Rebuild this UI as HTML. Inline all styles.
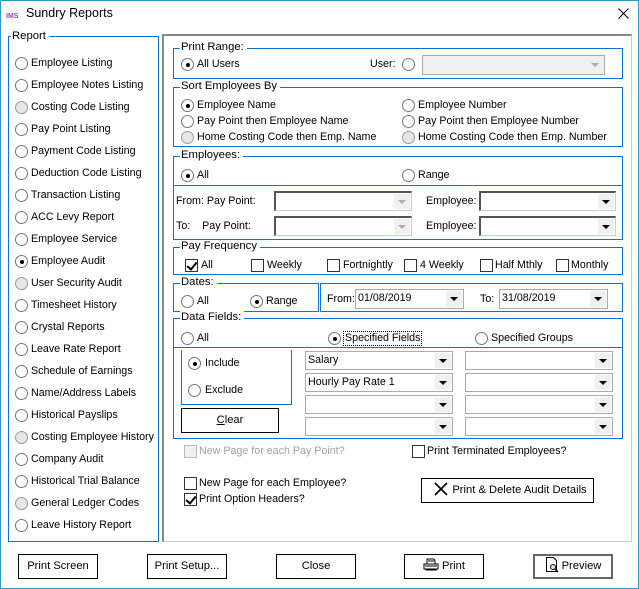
<!DOCTYPE html>
<html><head><meta charset="utf-8"><style>
*{box-sizing:border-box;margin:0;padding:0}
body{width:639px;height:589px;position:relative;background:#fff;font-family:Tahoma,"Liberation Sans","DejaVu Sans",sans-serif;font-size:10.7px;color:#000;overflow:hidden}
.a{position:absolute;white-space:nowrap;line-height:13px}
.g{position:absolute;border:1px solid #0a74d4}
.gl{position:absolute;background:#fff;padding:0 3px 0 1px;line-height:13px;font-size:11.3px}
.r{position:absolute;width:13px;height:13px;border:1px solid #777;border-radius:50%;background:#fff}
.r.gr{background:#e6e6e6;border-color:#999}
.r.on::after{content:"";position:absolute;left:3.5px;top:3.5px;width:4px;height:4px;border-radius:50%;background:#000}
.c{position:absolute;width:13px;height:13px;border:1px solid #333;background:#fff}
.c.dis{border-color:#bbb;background:#f0f0f0}
.c.on::after{content:"";position:absolute;left:3px;top:0px;width:4px;height:8px;border:solid #000;border-width:0 2px 2px 0;transform:rotate(40deg)}
.cb{position:absolute;border:1px solid #aaa;background:#fff;line-height:16px;padding-left:2px}
.cb.d{border-color:#555 #ccc #ccc #555;border-width:2px 1px 1px 2px}
.arr{position:absolute;right:1px;top:1px;bottom:1px;width:16px;background:#f0f0f0}
.arr::after{content:"";position:absolute;left:4px;top:50%;margin-top:-2px;border:4px solid transparent;border-top:4px solid #000;border-bottom:0}
.arr.gy::after{border-top-color:#aaa}
.b{position:absolute;border:1px solid #000;background:#fff;text-align:center;line-height:22px;font-size:11.2px}
</style></head><body>
<div style="position:absolute;left:0;top:0;width:639px;height:589px;border:1px solid #2f9bc0"></div>
<div class="a" style="left:6px;top:10px;font-size:7px;font-weight:bold;color:#a23ab8">IMS</div>
<div class="a" style="left:26px;top:5px;font-size:12.5px;line-height:16px">Sundry Reports</div>
<svg style="position:absolute;left:618px;top:8px" width="11" height="11"><path d="M0.5 0.5L10.5 10.5M10.5 0.5L0.5 10.5" stroke="#000" stroke-width="1"/></svg>

<div class="g" style="left:8px;top:36px;width:151px;height:506px"></div>
<div class="gl" style="left:11px;top:30px">Report</div>
<div class="r" style="left:15px;top:57px"></div><div class="a" style="left:31px;top:57px">Employee Listing</div>
<div class="r" style="left:15px;top:79px"></div><div class="a" style="left:31px;top:79px">Employee Notes Listing</div>
<div class="r gr" style="left:15px;top:101px"></div><div class="a" style="left:31px;top:101px">Costing Code Listing</div>
<div class="r" style="left:15px;top:123px"></div><div class="a" style="left:31px;top:123px">Pay Point Listing</div>
<div class="r" style="left:15px;top:145px"></div><div class="a" style="left:31px;top:145px">Payment Code Listing</div>
<div class="r" style="left:15px;top:167px"></div><div class="a" style="left:31px;top:167px">Deduction Code Listing</div>
<div class="r" style="left:15px;top:189px"></div><div class="a" style="left:31px;top:189px">Transaction Listing</div>
<div class="r" style="left:15px;top:211px"></div><div class="a" style="left:31px;top:211px">ACC Levy Report</div>
<div class="r" style="left:15px;top:233px"></div><div class="a" style="left:31px;top:233px">Employee Service</div>
<div class="r on" style="left:15px;top:255px"></div><div class="a" style="left:31px;top:255px">Employee Audit</div>
<div class="r gr" style="left:15px;top:277px"></div><div class="a" style="left:31px;top:277px">User Security Audit</div>
<div class="r" style="left:15px;top:299px"></div><div class="a" style="left:31px;top:299px">Timesheet History</div>
<div class="r" style="left:15px;top:321px"></div><div class="a" style="left:31px;top:321px">Crystal Reports</div>
<div class="r" style="left:15px;top:343px"></div><div class="a" style="left:31px;top:343px">Leave Rate Report</div>
<div class="r" style="left:15px;top:365px"></div><div class="a" style="left:31px;top:365px">Schedule of Earnings</div>
<div class="r" style="left:15px;top:387px"></div><div class="a" style="left:31px;top:387px">Name/Address Labels</div>
<div class="r" style="left:15px;top:409px"></div><div class="a" style="left:31px;top:409px">Historical Payslips</div>
<div class="r gr" style="left:15px;top:431px"></div><div class="a" style="left:31px;top:431px">Costing Employee History</div>
<div class="r" style="left:15px;top:453px"></div><div class="a" style="left:31px;top:453px">Company Audit</div>
<div class="r" style="left:15px;top:475px"></div><div class="a" style="left:31px;top:475px">Historical Trial Balance</div>
<div class="r gr" style="left:15px;top:497px"></div><div class="a" style="left:31px;top:497px">General Ledger Codes</div>
<div class="r" style="left:15px;top:519px"></div><div class="a" style="left:31px;top:519px">Leave History Report</div>

<div style="position:absolute;left:162px;top:34px;width:470px;height:508px;border:2px solid #888;border-right:1px solid #ccc;border-bottom:1px solid #ccc"></div>

<div class="g" style="left:173px;top:48px;width:450px;height:31px"></div>
<div class="gl" style="left:180px;top:41px">Print Range:</div>
<div class="r on" style="left:181px;top:58px"></div><div class="a" style="left:197px;top:58px">All Users</div>
<div class="a" style="left:370px;top:58px">User:</div>
<div class="r" style="left:402px;top:58px"></div>
<div class="cb" style="left:422px;top:55px;width:183px;height:20px;background:#f0f0f0"><div class="arr gy" style="background:none"></div></div>

<div class="g" style="left:173px;top:87px;width:450px;height:60px"></div>
<div class="gl" style="left:180px;top:80px">Sort Employees By</div>
<div class="r on" style="left:181px;top:99px"></div><div class="a" style="left:197px;top:99px">Employee Name</div>
<div class="r" style="left:181px;top:115px"></div><div class="a" style="left:197px;top:115px">Pay Point then Employee Name</div>
<div class="r gr" style="left:181px;top:131px"></div><div class="a" style="left:197px;top:131px">Home Costing Code then Emp. Name</div>
<div class="r" style="left:402px;top:99px"></div><div class="a" style="left:418px;top:99px">Employee Number</div>
<div class="r" style="left:402px;top:115px"></div><div class="a" style="left:418px;top:115px">Pay Point then Employee Number</div>
<div class="r gr" style="left:402px;top:131px"></div><div class="a" style="left:418px;top:131px">Home Costing Code then Emp. Number</div>

<div class="g" style="left:173px;top:156px;width:450px;height:30px"></div>
<div class="g" style="left:173px;top:185px;width:450px;height:55px"></div>
<div class="gl" style="left:180px;top:149px">Employees:</div>
<div class="r on" style="left:181px;top:169px"></div><div class="a" style="left:197px;top:169px">All</div>
<div class="r" style="left:402px;top:169px"></div><div class="a" style="left:418px;top:169px">Range</div>
<div class="a" style="left:176px;top:195px">From: Pay Point:</div>
<div class="a" style="left:176px;top:220px">To:&nbsp;&nbsp;&nbsp; Pay Point:</div>
<div class="cb d" style="left:274px;top:191px;width:138px;height:20px"><div class="arr gy"></div></div>
<div class="cb d" style="left:274px;top:216px;width:138px;height:20px"><div class="arr gy"></div></div>
<div class="a" style="left:426px;top:195px">Employee:</div>
<div class="a" style="left:426px;top:220px">Employee:</div>
<div class="cb d" style="left:479px;top:191px;width:137px;height:20px"><div class="arr"></div></div>
<div class="cb d" style="left:479px;top:216px;width:137px;height:20px"><div class="arr"></div></div>

<div class="g" style="left:173px;top:247px;width:450px;height:28px"></div>
<div class="gl" style="left:180px;top:240px">Pay Frequency</div>
<div class="c on" style="left:185px;top:259px"></div><div class="a" style="left:201px;top:259px">All</div>
<div class="c" style="left:251px;top:259px"></div><div class="a" style="left:267px;top:259px">Weekly</div>
<div class="c" style="left:327px;top:259px"></div><div class="a" style="left:343px;top:259px">Fortnightly</div>
<div class="c" style="left:404px;top:259px"></div><div class="a" style="left:420px;top:259px">4 Weekly</div>
<div class="c" style="left:480px;top:259px"></div><div class="a" style="left:495px;top:259px">Half Mthly</div>
<div class="c" style="left:556px;top:259px"></div><div class="a" style="left:571px;top:259px">Monthly</div>

<div class="g" style="left:173px;top:283px;width:146px;height:29px"></div>
<div class="g" style="left:320px;top:283px;width:303px;height:29px"></div>
<div class="gl" style="left:180px;top:276px">Dates:</div>
<div class="r" style="left:181px;top:295px"></div><div class="a" style="left:197px;top:295px">All</div>
<div class="r on" style="left:250px;top:295px"></div><div class="a" style="left:266px;top:295px">Range</div>
<div class="a" style="left:327px;top:293px">From:</div>
<div class="cb" style="left:355px;top:289px;width:109px;height:20px;line-height:17px">01/08/2019<div class="arr"></div></div>
<div class="a" style="left:480px;top:293px">To:</div>
<div class="cb" style="left:499px;top:289px;width:109px;height:20px;line-height:17px">31/08/2019<div class="arr"></div></div>

<div class="g" style="left:173px;top:318px;width:450px;height:30px"></div>
<div class="g" style="left:173px;top:348px;width:450px;height:91px;border-top:none"></div>
<div class="gl" style="left:180px;top:311px">Data Fields:</div>
<div class="r" style="left:181px;top:332px"></div><div class="a" style="left:197px;top:332px">All</div>
<div class="r on" style="left:328px;top:332px"></div><div class="a" style="left:343px;top:331px;border:1px dotted #000;padding:0 1px">Specified Fields</div>
<div class="r" style="left:475px;top:332px"></div><div class="a" style="left:491px;top:332px">Specified Groups</div>
<div class="g" style="left:181px;top:350px;width:111px;height:55px;border-top:none"></div>
<div class="r on" style="left:188px;top:357px"></div><div class="a" style="left:205px;top:357px">Include</div>
<div class="r" style="left:188px;top:384px"></div><div class="a" style="left:205px;top:384px">Exclude</div>
<div class="b" style="left:181px;top:408px;width:98px;height:25px"><u>C</u>lear</div>
<div class="cb" style="left:305px;top:351px;width:148px;height:19px">Salary<div class="arr"></div></div>
<div class="cb" style="left:305px;top:373px;width:148px;height:19px">Hourly Pay Rate 1<div class="arr"></div></div>
<div class="cb" style="left:305px;top:395px;width:148px;height:19px"><div class="arr"></div></div>
<div class="cb" style="left:305px;top:417px;width:148px;height:19px"><div class="arr"></div></div>
<div class="cb" style="left:465px;top:351px;width:148px;height:19px"><div class="arr"></div></div>
<div class="cb" style="left:465px;top:373px;width:148px;height:19px"><div class="arr"></div></div>
<div class="cb" style="left:465px;top:395px;width:148px;height:19px"><div class="arr"></div></div>
<div class="cb" style="left:465px;top:417px;width:148px;height:19px"><div class="arr"></div></div>

<div class="c dis" style="left:184px;top:445px"></div><div class="a" style="left:199px;top:445px;color:#a0a0a0">New Page for each Pay Point?</div>
<div class="c" style="left:412px;top:445px"></div><div class="a" style="left:427px;top:445px">Print Terminated Employees?</div>
<div class="c" style="left:184px;top:477px"></div><div class="a" style="left:199px;top:477px">New Page for each Employee?</div>
<div class="c on" style="left:184px;top:493px"></div><div class="a" style="left:199px;top:493px">Print Option Headers?</div>
<div class="b" style="left:421px;top:478px;width:173px;height:25px;padding-left:6px"><svg width="14" height="14" style="vertical-align:-3px;margin-right:4px"><path d="M1 1L13 13M13 1L1 13" stroke="#000" stroke-width="1.6"/></svg>Print &amp; Delete Audit Details</div>

<div class="b" style="left:18px;top:554px;width:80px;height:25px">Print Screen</div>
<div class="b" style="left:147px;top:554px;width:80px;height:25px">Print Setup...</div>
<div class="b" style="left:276px;top:554px;width:80px;height:25px">Close</div>
<div class="b" style="left:404px;top:554px;width:80px;height:25px"><svg width="16" height="13" style="vertical-align:-2px;margin-right:3px"><path d="M4 1h7l1 2v3H4z M1 6h14v5H1z M3 11h10v1H3z" fill="#fff" stroke="#000" stroke-width="1"/><path d="M5 3h6M2 8h12" stroke="#000"/></svg>Print</div>
<div class="b" style="left:533px;top:554px;width:80px;height:25px;border:2px solid #666;line-height:21px"><svg width="14" height="16" style="vertical-align:-4px;margin-right:3px"><path d="M1.5 0.5h7l3 3v11h-10z" fill="#fff" stroke="#000"/><circle cx="8" cy="10" r="2.5" fill="#cfe8f5" stroke="#000"/><path d="M10 12l3 3" stroke="#000" stroke-width="1.5"/></svg>Preview</div>
</body></html>
